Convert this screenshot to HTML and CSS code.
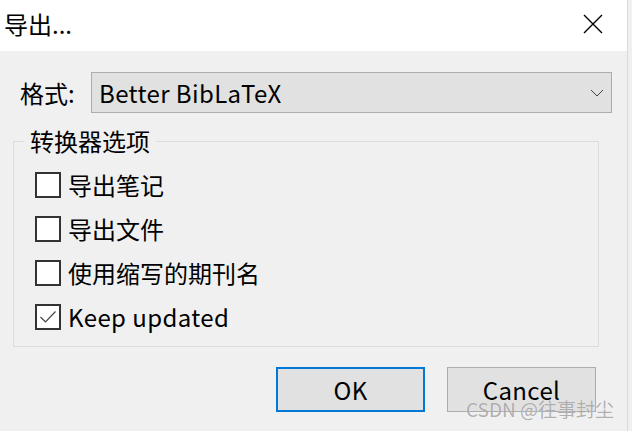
FILE: index.html
```html
<!DOCTYPE html>
<html lang="zh-CN">
<head>
<meta charset="utf-8">
<title>导出...</title>
<link rel="stylesheet" href="styles.css">
</head>
<body>
<div class="window">
  <div class="titlebar">
    <span class="title">导出...</span>
    <svg class="close" width="20" height="20" viewBox="0 0 20 20"><path d="M1 1 L19 19 M19 1 L1 19" stroke="#000" stroke-width="1.4" fill="none"/></svg>
  </div>
  <div class="content">
    <div class="format-row">
      <span class="label">格式:</span>
      <div class="select">
        <span class="select-text latin">Better BibLaTeX</span>
        <svg class="chevron" width="14" height="8" viewBox="0 0 14 8"><path d="M1 1 L7 7 L13 1" stroke="#444" stroke-width="1" fill="none"/></svg>
      </div>
    </div>
    <div class="group">
      <div class="legend">转换器选项</div>
      <label class="check"><span class="box"></span><span class="ctext">导出笔记</span></label>
      <label class="check"><span class="box"></span><span class="ctext">导出文件</span></label>
      <label class="check"><span class="box"></span><span class="ctext">使用缩写的期刊名</span></label>
      <label class="check"><span class="box"><svg width="22" height="22" viewBox="0 0 22 22"><path d="M3.5 11 L8.5 16 L18.5 5.5" stroke="#444" stroke-width="1.2" fill="none"/></svg></span><span class="ctext latin">Keep updated</span></label>
    </div>
    <div class="buttons">
      <div class="btn btn-ok latin">OK</div>
      <div class="btn btn-cancel latin">Cancel</div>
    </div>
  </div>
  <div class="watermark">CSDN @往事封尘</div>
</div>
</body>
</html>
```
FILE: styles.css
```css
html, body {
  margin: 0;
  padding: 0;
  background: #f0f0f0;
}
body {
  width: 632px;
  height: 431px;
  overflow: hidden;
  font-family: "Noto Sans CJK SC", "Noto Sans", sans-serif;
  color: #000;
}
.window {
  position: relative;
  width: 627px;
  height: 431px;
  border-right: 1px solid #d9d9d9;
  background: #f0f0f0;
}
.latin {
  letter-spacing: 0.4px;
}
.titlebar {
  height: 51px;
  background: #fff;
  display: flex;
  align-items: center;
  justify-content: space-between;
  padding: 0 24px 0 4px;
}
.title {
  font-size: 24px;
  line-height: 30px;
  margin-top: -4px;
}
.close {
  display: block;
  margin-top: -3px;
}
.content {
  padding: 21px 0 0 13px;
}
.format-row {
  display: flex;
  align-items: center;
  padding-left: 7px;
}
.label {
  font-size: 24px;
  width: 71px;
  line-height: 41px;
}
.select {
  width: 505px;
  height: 39px;
  border: 1px solid #adadad;
  background: #e1e1e1;
  display: flex;
  align-items: center;
  justify-content: space-between;
  padding: 0 7px 0 7px;
}
.select-text {
  font-size: 24px;
  line-height: 39px;
}
.chevron {
  display: block;
}
.group {
  margin-top: 28px;
  width: 586px;
  height: 206px;
  border: 1px solid #dcdcdc;
  position: relative;
  padding: 30px 0 0 21px;
  box-sizing: border-box;
  display: flex;
  flex-direction: column;
  gap: 18px;
}
.legend {
  position: absolute;
  left: 10px;
  top: -15px;
  padding: 0 6px;
  background: #f0f0f0;
  font-size: 24px;
  line-height: 28px;
}
.check {
  display: flex;
  align-items: center;
  gap: 7px;
  height: 26px;
}
.box {
  width: 22px;
  height: 22px;
  border: 2px solid #333;
  background: #fff;
  display: block;
}
.box svg {
  display: block;
}
.ctext {
  font-size: 24px;
  line-height: 26px;
}
.buttons {
  display: flex;
  gap: 22px;
  padding-left: 263px;
  margin-top: 20px;
}
.btn {
  width: 149px;
  height: 45px;
  box-sizing: border-box;
  background: #e1e1e1;
  display: flex;
  align-items: center;
  justify-content: center;
  font-size: 24px;
}
.btn-ok {
  border: 2px solid #0078d7;
}
.btn-cancel {
  border: 1px solid #adadad;
}
.watermark {
  position: absolute;
  left: 466px;
  top: 396px;
  font-size: 19px;
  line-height: 26px;
  color: rgba(110, 110, 110, 0.55);
  text-shadow: 0 0 1px rgba(255, 255, 255, 0.8);
  white-space: nowrap;
}
```
